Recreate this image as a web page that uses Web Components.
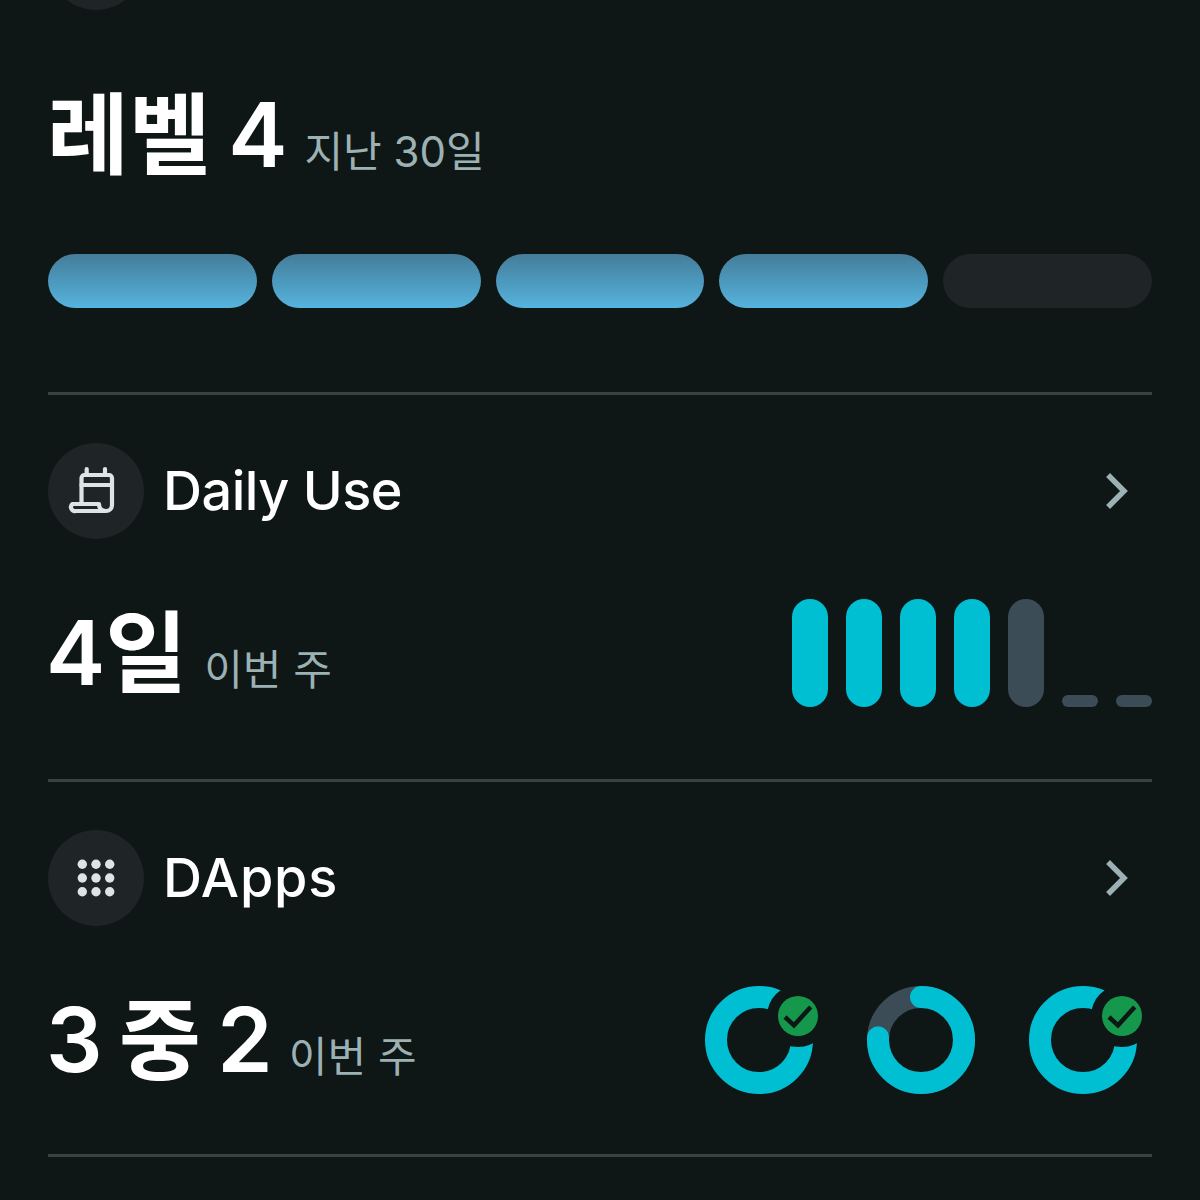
<!DOCTYPE html>
<html lang="ko"><head><meta charset="utf-8">
<style>
html,body{margin:0;padding:0;background:#0e1616;height:1200px;overflow:hidden}
body{font-family:Inter,"Noto Sans CJK KR",sans-serif}
</style></head><body>
<insight-page>
  <section-head style="margin-top:-86px;height:96px" data-empty></section-head>
  <level-block></level-block>
  <h-rule></h-rule>
  <section-head data-title="Daily Use" data-icon="cal" data-ls="-.5" style="margin-top:48px"></section-head>
  <stat-row data-main="4일" data-sub="이번 주" style="margin-top:60px;height:108px" data-sub-gap="17"><week-bars></week-bars></stat-row>
  <h-rule style="margin-top:72px"></h-rule>
  <section-head data-title="DApps" data-icon="dots" data-ls=".8" style="margin-top:48px"></section-head>
  <stat-row data-main="3 중 2" data-sub="이번 주" style="margin-top:60px;height:108px" data-sub-gap="16"><ring-set></ring-set></stat-row>
  <h-rule style="margin-top:60px"></h-rule>
</insight-page>
<script>
const def=(n,html)=>customElements.define(n,class extends HTMLElement{connectedCallback(){if(this.shadowRoot)return;const s=this.attachShadow({mode:'open'});s.innerHTML=typeof html==='function'?html(this):html;}});
def('insight-page',`<style>:host{display:flex;flex-direction:column;padding:0 48px;box-sizing:border-box;width:1200px}</style><slot></slot>`);
def('h-rule',`<style>:host{display:block;height:3px;background:#394243;flex:none}</style>`);
const d=[0,1,2].flatMap(r=>[0,1,2].map(c=>`<circle cx="${14.3+c*13.7}" cy="${14.3+r*13.7}" r="4.700"/>`)).join('');
const icons={
cal:`<svg width="56" height="56" viewBox="0 0 56 56" fill="none" stroke="#dfe3e3" stroke-width="4.200" stroke-linecap="round" stroke-linejoin="round"><path d="M13.500 41V15a3 3 0 0 1 3-3H41a3 3 0 0 1 3 3V42a6 6 0 0 1-6 6H8a4 4 0 0 1-3.500-7H31c0 4 2 7 7 7"/><path d="M13.500 22H44"/><path d="M18.700 12V6M37 12V6"/></svg>`,
dots:`<svg width="56" height="56" viewBox="0 0 56 56" fill="#dfe3e3">${d}</svg>`};
def('section-head',h=>`<style>:host{display:flex;align-items:center;height:96px;flex:none}
.c{width:96px;height:96px;border-radius:50%;background:#1f2526;display:flex;align-items:center;justify-content:center;flex:none}
.t{margin-left:19px;font-size:54px;font-weight:500;color:#fff;flex:1;line-height:96px;letter-spacing:${h.dataset.ls||0}px}
svg.a{margin-right:22px}</style>
<div class="c">${icons[h.dataset.icon]||''}</div>
${h.dataset.title?`<div class="t">${h.dataset.title}</div><svg class="a" width="26" height="40" viewBox="0 0 26 40" fill="none" stroke="#9bb1b3" stroke-width="5.500" stroke-linecap="square"><path d="M6 6L20 20L6 34"/></svg>`:''}`);
const bigStyle=`.m{font-size:89px;font-weight:600;color:#fff;line-height:108px;word-spacing:-6px;margin-left:-2px}.s{font-size:42px;font-weight:400;color:#9bb1b3;line-height:108px}`;
def('level-block',`<style>:host{display:block;flex:none}${bigStyle}
.m{margin-left:-1px;word-spacing:-5px}
.l{display:flex;align-items:baseline;gap:17px;margin-top:71px;height:108px}
.b{display:flex;gap:15px;margin-top:65px;margin-bottom:84px}
.b i{flex:1;height:54px;border-radius:27px;background:linear-gradient(#447d99,#56b3df)}
.b i.o{background:#1f2526}</style>
<div class="l"><span class="m">레벨 4</span><span class="s">지난 30일</span></div>
<div class="b"><i></i><i></i><i></i><i></i><i class="o"></i></div>`);
def('stat-row',h=>`<style>:host{display:flex;justify-content:space-between;align-items:flex-start;flex:none}${bigStyle}
.l{display:flex;align-items:baseline;gap:${h.dataset.subGap}px}</style>
<div class="l"><span class="m">${h.dataset.main}</span><span class="s">${h.dataset.sub}</span></div><slot></slot>`);
def('week-bars',`<style>:host{display:flex;gap:18px;align-items:flex-end;height:108px}
i{width:36px;height:108px;border-radius:18px;background:#00bfd2}i.g{background:#3c4c57}i.d{height:12px;border-radius:6px;background:#3c4c57}</style>
<i></i><i></i><i></i><i></i><i class="g"></i><i class="d"></i><i class="d"></i>`);
const CIRC=2*Math.PI*43.5;
const check=`<circle cx="93" cy="30" r="31" fill="#0e1616"/><circle cx="93" cy="30" r="20" fill="#16984c"/><path d="M80 31L89 39.300L105.700 21" fill="none" stroke="#0e1616" stroke-width="4.500"/>`;
const ring=(done)=>`<svg width="116" height="108" viewBox="0 0 116 108" style="overflow:visible">${done
 ?`<circle cx="54" cy="54" r="43" fill="none" stroke="#00bfd2" stroke-width="22"/>${check}`
 :`<circle cx="54" cy="54" r="43" fill="none" stroke="#3c4c57" stroke-width="22"/><circle cx="54" cy="54" r="43" fill="none" stroke="#00bfd2" stroke-width="22" stroke-linecap="round" stroke-dasharray="${CIRC*.75} ${CIRC}" transform="rotate(-90 54 54)"/>`}</svg>`;
def('ring-set',`<style>:host{display:flex;gap:46px;align-items:center;height:108px;margin-right:7px}svg{display:block;flex:none}</style>${ring(1)}${ring(0)}${ring(1)}`);
</script>
</body></html>
